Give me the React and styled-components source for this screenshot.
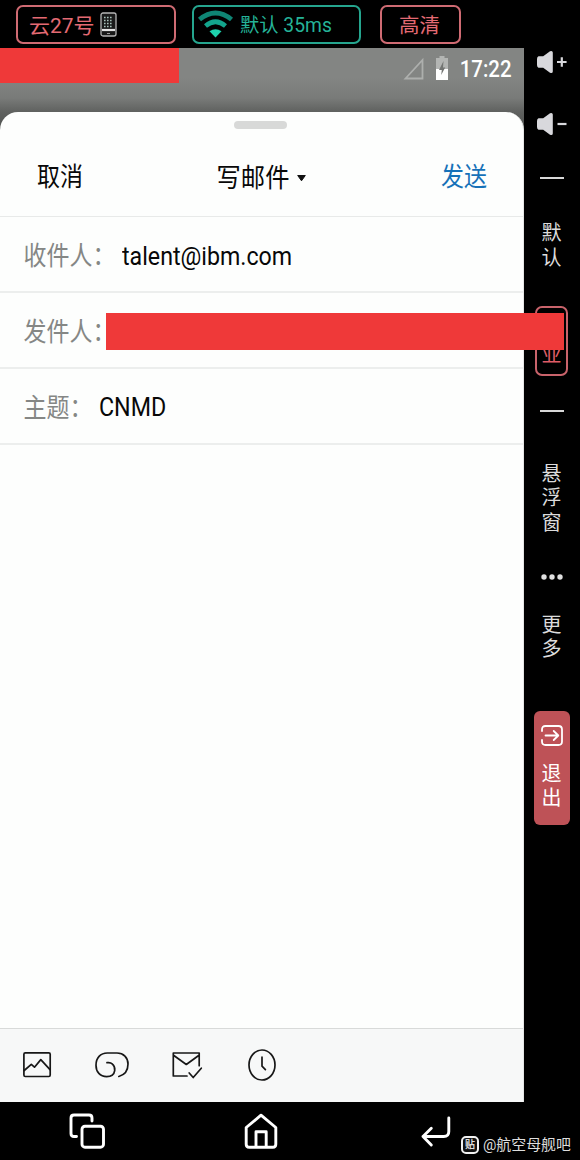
import React from 'react';
import styled, { createGlobalStyle } from 'styled-components';

const GlobalStyle = createGlobalStyle`
  * { box-sizing: border-box; }
  html, body { margin: 0; padding: 0; background: #000; }
  body { font-family: Roboto, "Noto Sans CJK SC", sans-serif; }
  svg { display: block; overflow: visible; flex: none; }
`;

const Page = styled.div`
  width: 580px;
  height: 1160px;
  display: flex;
  flex-direction: column;
  background: #000;
  overflow: hidden;
`;

const TopBar = styled.header`
  height: 48px;
  flex: none;
  display: flex;
  align-items: flex-start;
  padding: 5px 0 0 16px;
`;

const Chip = styled.div`
  width: ${(p) => p.$width}px;
  height: 39px;
  margin-right: ${(p) => p.$gap || 0}px;
  padding: 0 0 0 ${(p) => p.$pad}px;
  display: flex;
  align-items: center;
  gap: ${(p) => p.$inner || 0}px;
  border: 2px solid ${(p) => p.$edge};
  border-radius: 7px;
  color: ${(p) => p.$color};
  font-size: ${(p) => p.$size}px;
  line-height: 34px;
  white-space: nowrap;
`;

const ChipText = styled.span`
  padding-top: 2px;
`;

const Body = styled.div`
  height: 1054px;
  flex: none;
  display: flex;
`;

const Screen = styled.main`
  width: 524px;
  flex: none;
  display: flex;
  flex-direction: column;
  background: linear-gradient(#838583 0, #838583 30px, #797b79 50px, #5f615f 64px, #4a4c4a 88px);
`;

const StatusBar = styled.div`
  height: 64px;
  flex: none;
  display: flex;
  justify-content: space-between;
`;

const StatusMask = styled.div`
  width: 179px;
  height: 35px;
  background: #ef3939;
`;

const StatusIcons = styled.div`
  height: 42px;
  display: flex;
  align-items: center;
  padding-right: 12px;
  color: #fff;
`;

const Clock = styled.span`
  margin: 2px 0 0 9px;
  font-size: 21.5px;
  font-weight: 500;
  line-height: 42px;
  transform: scale(0.95, 1.07);
  transform-origin: right center;
`;

const Sheet = styled.section`
  flex: 1;
  display: flex;
  flex-direction: column;
  background: #fdfefd;
  border-radius: 18px 18px 0 0;
  border-right: 1px solid #e5e6e5;
`;

const HandleRow = styled.div`
  height: 25px;
  display: flex;
  justify-content: center;
  align-items: center;
  padding-right: 2px;
`;

const Handle = styled.div`
  width: 53px;
  height: 8px;
  border-radius: 4px;
  background: #d8d9d8;
`;

const Header = styled.div`
  height: 80px;
  display: grid;
  grid-template-columns: 1fr auto 1fr;
  align-items: center;
  padding: 3px 36px 0 37px;
  border-bottom: 1px solid #e8eae9;
`;

const Title = styled.div`
  display: flex;
  align-items: center;
  gap: 8px;
  padding-right: 1px;
`;

const Tall = styled.span`
  display: block;
  font-size: ${(p) => p.$size || 23}px;
  line-height: 30px;
  color: ${(p) => p.$color || '#080808'};
  text-align: ${(p) => p.$align || 'left'};
  white-space: nowrap;
  transform: scale(${(p) => p.$sx || 1}, ${(p) => p.$sy || 1.13});
  transform-origin: ${(p) => p.$align || 'left'} center;
`;

const Label = styled(Tall)`
  padding-top: 2px;
  color: #858785;
`;

const Field = styled.div`
  position: relative;
  height: 76px;
  display: flex;
  align-items: center;
  gap: ${(p) => p.$gap || 0}px;
  padding: 3px 0 0 23.5px;
  border-bottom: 2px solid #eceeed;
`;

const SenderMask = styled.div`
  position: absolute;
  z-index: 2;
  left: 106px;
  top: 20px;
  width: 458px;
  height: 37px;
  background: #ef3939;
`;

const Compose = styled.div`
  flex: 1;
`;

const Tools = styled.div`
  height: 74px;
  display: flex;
  align-items: center;
  padding: 0 0 1px 23px;
  background: #f7f8f8;
  border-top: 1px solid #d8dad9;
`;

const Tool = styled.div`
  width: ${(p) => p.$width}px;
`;

const Side = styled.aside`
  width: 56px;
  display: flex;
  flex-direction: column;
  align-items: center;
  padding-right: 1px;
  color: #dcdcdc;
`;

const SideItem = styled.div`
  width: 100%;
  height: ${(p) => p.$height}px;
  flex: none;
  display: flex;
  align-items: center;
  justify-content: center;
`;

const Divider = styled.div`
  width: 24px;
  height: 2px;
  background: #d8d8d8;
`;

const Vertical = styled.span`
  width: 20px;
  padding-top: 2px;
  font-size: 20px;
  line-height: 24.3px;
  text-align: center;
  word-break: break-all;
`;

const Outlined = styled.div`
  width: 33px;
  height: 70px;
  flex: none;
  display: flex;
  justify-content: center;
  padding-top: 9px;
  border: 2px solid #c9636b;
  border-radius: 7px;
  color: #df5c66;
`;

const Exit = styled.div`
  width: 36px;
  height: 114px;
  flex: none;
  display: flex;
  flex-direction: column;
  align-items: center;
  gap: 14px;
  padding-top: 14px;
  border-radius: 6px;
  background: #be5257;
  color: #fff;
`;

const NavBar = styled.nav`
  height: 58px;
  flex: none;
  display: flex;
  align-items: flex-start;
  padding: 11px 0 0 69px;
`;

const NavButton = styled.div`
  width: ${(p) => p.$width}px;
`;

const Watermark = styled.div`
  display: flex;
  align-items: center;
  gap: 4px;
  margin: 22px 0 0 3px;
  color: #dedede;
  font-size: 14.9px;
  line-height: 20px;
  white-space: nowrap;
`;

const Badge = styled.span`
  width: 18px;
  height: 18px;
  display: flex;
  align-items: center;
  justify-content: center;
  border: 2.5px solid #f1f1f1;
  border-radius: 5px;
  background: #111;
  font-size: 10px;
  font-weight: 700;
  line-height: 14px;
`;

const PhoneIcon = () => (
  <svg width="17" height="25" viewBox="0 0 17 25">
    <rect x="1" y="1" width="15" height="23" rx="2" fill="#191919" stroke="#b5b5b5" strokeWidth="1.3" />
    <path d="M4 5.5h9M4 8.5h9M4 11.5h9M4 14.5h9" stroke="#a9c2bb" strokeWidth="1.6" strokeDasharray="1.6 1.4" />
    <path d="M2 18h13" stroke="#e4e4e4" strokeWidth="2.2" />
    <path d="M7 21.5h3" stroke="#999" />
  </svg>
);

const WifiIcon = () => (
  <svg width="35" height="27" viewBox="0 0 35 27">
    <path d="M1.5 8.5Q17.5 -4.5 33.5 8.5" fill="none" stroke="#0f8574" strokeWidth="4.8" />
    <path d="M7.5 15Q17.5 6.5 27.5 15" fill="none" stroke="#13a58d" strokeWidth="4.6" />
    <path d="M11.5 20.3Q17.5 16 23.5 20.3L17.5 26.5Z" fill="#1ed3ae" />
  </svg>
);

const SignalIcon = () => (
  <svg width="20" height="22" viewBox="0 0 20 22">
    <path d="M1.5 20.5H18.5V2Z" fill="none" stroke="#adafad" strokeWidth="1.8" />
  </svg>
);

const BatteryIcon = () => (
  <svg width="24" height="24" viewBox="-12 1 24 24">
    <path d="M3.5 0h5v2H12v22H0V2h3.5Z" fill="#b3b5b3" />
    <path d="M0 13h12v11H0Z" fill="#fff" />
    <path d="M7.5 5L3 14H5.8L5.2 19L9.2 11.5H7Z" fill="#737573" />
  </svg>
);

const VolumeIcon = ({ plus }) => (
  <svg width="30" height="22" viewBox="0 0 30 22">
    <path d="M1.5 5.2H6.2L13 .3Q15.6-.8 15.8 1.5V20.5Q15.6 22.8 13 21.7L6.2 16.8H1.5Q0 16.2 0 14V8Q0 5.8 1.5 5.2Z" fill="#d8d8dc" />
    <path d={plus ? 'M20 11h9.6M24.8 6.2v9.6' : 'M20.5 11h9'} stroke="#d8d8dc" strokeWidth="2.2" />
  </svg>
);

const DotsIcon = () => (
  <svg width="22" height="6" viewBox="0 0 22 6" fill="#e0e0e0">
    <circle cx="3" cy="3" r="2.7" />
    <circle cx="11" cy="3" r="2.7" />
    <circle cx="19" cy="3" r="2.7" />
  </svg>
);

const ExitIcon = () => (
  <svg width="22" height="21" viewBox="0 0 22 21" fill="none" stroke="#fff" strokeWidth="1.8" strokeLinecap="round" strokeLinejoin="round">
    <path d="M1 6V4.5Q1 1 4.5 1H17.5Q21 1 21 4.5V16.5Q21 20 17.5 20H4.5Q1 20 1 16.5V15" />
    <path d="M4.5 10.5H17M12.7 6L17.3 10.5L12.7 15" />
  </svg>
);

const line = { fill: 'none', stroke: '#171717', strokeWidth: 1.7, strokeLinecap: 'round', strokeLinejoin: 'round' };

const ImageIcon = () => (
  <svg width="28" height="26" viewBox="0 0 28 26" {...line}>
    <rect x=".9" y=".9" width="26.3" height="23.6" rx="1.4" />
    <path d="M1.2 18.5L8.3 12.3L11.5 15.2L17.8 7.6L27 17.6" />
  </svg>
);

const AttachIcon = () => (
  <svg width="34" height="26" viewBox="0 0 34 26" {...line}>
    <path d="M12 10.7Q15.3 10 17.5 12.1Q20.2 14.5 19.7 18.6Q18.8 24.5 11.7 24.6C5 24.6 1 20 1 13.2C1 6 5.4 1 12.3 1H22C28.5 1 33 5.5 33 12C33 19 29.8 22.8 23.8 24.5" />
  </svg>
);

const MailIcon = () => (
  <svg width="31" height="27" viewBox="0 0 31 27" {...line}>
    <path d="M15 24H1.3V1H27.2V13.7M1.5 3.2L14.3 12.5L27 3.2M17.2 21L21.2 25.5L29.3 16.2" />
  </svg>
);

const ClockIcon = () => (
  <svg width="28" height="32" viewBox="0 0 28 32" {...line}>
    <ellipse cx="14" cy="16" rx="13" ry="15" />
    <path d="M14 8.2V17.2L17.4 20.7" />
  </svg>
);

const nav = { fill: 'none', stroke: '#fff', strokeWidth: 2.9, strokeLinecap: 'round', strokeLinejoin: 'round' };

const RecentIcon = () => (
  <svg width="36" height="36" viewBox="0 0 36 36" {...nav}>
    <path d="M7.5 23.5H5Q2 23.5 2 20.5V5Q2 2 5 2H20Q23 2 23 5V8" />
    <rect x="13" y="13.2" width="21.5" height="21" rx="3" />
  </svg>
);

const HomeIcon = () => (
  <svg width="34" height="36" viewBox="0 0 34 36" {...nav}>
    <path d="M2.2 14.5L17 2.2L31.8 14.5V31.3Q31.8 34.3 28.8 34.3H5.2Q2.2 34.3 2.2 31.3Z" />
    <path d="M12 33.5V18.8H22.2V33.5" />
  </svg>
);

const BackIcon = () => (
  <svg width="32" height="36" viewBox="0 0 32 36" {...nav}>
    <path d="M28.8 5V18.5Q28.8 23.5 23.8 23.5H3M11.3 15.3L3 23.5L11.3 32" />
  </svg>
);

export default function App() {
  return (
    <Page>
      <GlobalStyle />
      <TopBar>
        <Chip $width={160} $gap={16} $pad={11} $inner={5} $color="#e46a73" $edge="#cf6b73" $size={21}>
          <ChipText>云27号</ChipText>
          <PhoneIcon />
        </Chip>
        <Chip $width={169} $gap={19} $pad={4} $inner={7} $color="#25b398" $edge="#25a58e" $size={19.3}>
          <WifiIcon />
          <ChipText>默认 35ms</ChipText>
        </Chip>
        <Chip $width={81} $pad={17} $color="#e46a73" $edge="#cf6b73" $size={20.5}>
          <ChipText>高清</ChipText>
        </Chip>
      </TopBar>
      <Body>
        <Screen>
          <StatusBar>
            <StatusMask />
            <StatusIcons>
              <SignalIcon />
              <BatteryIcon />
              <Clock>17:22</Clock>
            </StatusIcons>
          </StatusBar>
          <Sheet>
            <HandleRow><Handle /></HandleRow>
            <Header>
              <Tall>取消</Tall>
              <Title>
                <Tall $size={24.3} $sy={1.08}>写邮件</Tall>
                <svg width="9" height="7" viewBox="0 0 9 7"><path d="M.7.5H8.3L4.5 5.8Z" fill="#111" stroke="#111" strokeLinejoin="round" /></svg>
              </Title>
              <Tall $align="right" $color="#1671b8">发送</Tall>
            </Header>
            <Field $gap={6.5}>
              <Label>收件人：</Label>
              <Tall $size={24} $sx={0.966} $sy={1.08}>talent@ibm.com</Tall>
            </Field>
            <Field>
              <Label>发件人：</Label>
              <SenderMask />
            </Field>
            <Field $gap={6}>
              <Label>主题：</Label>
              <Tall $sx={1.01}>CNMD</Tall>
            </Field>
            <Compose />
            <Tools>
              <Tool $width={72}><ImageIcon /></Tool>
              <Tool $width={77}><AttachIcon /></Tool>
              <Tool $width={76}><MailIcon /></Tool>
              <Tool $width={28}><ClockIcon /></Tool>
            </Tools>
          </Sheet>
        </Screen>
        <Side>
          <SideItem $height={27}><VolumeIcon plus /></SideItem>
          <SideItem $height={98}><VolumeIcon /></SideItem>
          <SideItem $height={10}><Divider /></SideItem>
          <SideItem $height={123}><Vertical>默认</Vertical></SideItem>
          <Outlined><Vertical>企业</Vertical></Outlined>
          <SideItem $height={70}><Divider /></SideItem>
          <SideItem $height={103}><Vertical>悬浮窗</Vertical></SideItem>
          <SideItem $height={56}><DotsIcon /></SideItem>
          <SideItem $height={62}><Vertical>更多</Vertical></SideItem>
          <SideItem $height={44} />
          <Exit>
            <ExitIcon />
            <Vertical>退出</Vertical>
          </Exit>
        </Side>
      </Body>
      <NavBar>
        <NavButton $width={175}><RecentIcon /></NavButton>
        <NavButton $width={176}><HomeIcon /></NavButton>
        <NavButton $width={38}><BackIcon /></NavButton>
        <Watermark><Badge>贴</Badge>@航空母舰吧</Watermark>
      </NavBar>
    </Page>
  );
}
